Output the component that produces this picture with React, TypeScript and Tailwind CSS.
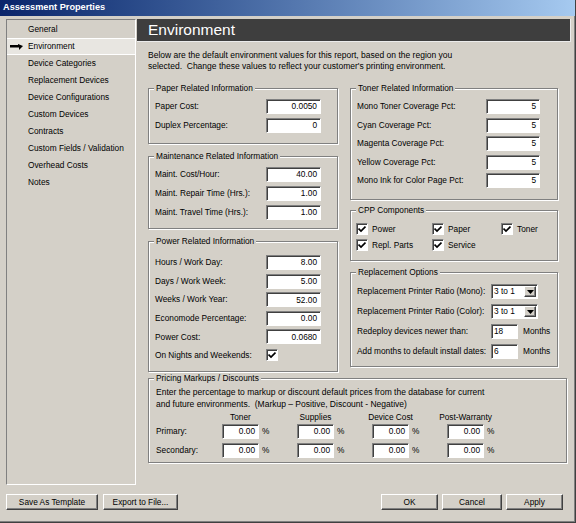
import React from "react"

const sunken =
  "bg-white border border-t-[#808080] border-l-[#808080] border-b-white border-r-white shadow-[inset_1px_1px_0_#404040]"
const raised =
  "bg-[#d4d0c8] border border-t-white border-l-white border-b-[#404040] border-r-[#404040] shadow-[inset_-1px_-1px_0_#808080]"

const navItems = [
  "General",
  "Environment",
  "Device Categories",
  "Replacement Devices",
  "Device Configurations",
  "Custom Devices",
  "Contracts",
  "Custom Fields / Validation",
  "Overhead Costs",
  "Notes",
]

function GroupBox({ title, className, children }: { title: string; className: string; children: React.ReactNode }) {
  return (
    <div className={`relative border border-[#808080] shadow-[inset_1px_1px_0_#fff,1px_1px_0_#fff] ${className}`}>
      <span className="absolute -top-[6px] left-[5px] bg-[#d4d0c8] px-[2px] leading-[11px]">{title}</span>
      {children}
    </div>
  )
}

function NumField({ value, w = "w-[55px]" }: { value: string; w?: string }) {
  return <div className={`${sunken} ${w} h-[15px] flex items-center justify-end pr-[3px] leading-none`}>{value}</div>
}

function Check() {
  return (
    <div className={`${sunken} w-[12px] h-[12px] flex items-center justify-center shrink-0`}>
      <svg width="8" height="8" viewBox="0 0 8 8">
        <path d="M0.5 3.5 L3 6 L7.5 1.5" stroke="#000" strokeWidth="1.7" fill="none" />
      </svg>
    </div>
  )
}

function Row({ label, children }: { label: string; children: React.ReactNode }) {
  return (
    <div className="flex items-center justify-between h-[15px]">
      <span className="whitespace-nowrap">{label}</span>
      {children}
    </div>
  )
}

function Select({ value }: { value: string }) {
  return (
    <div className={`${sunken} w-[47px] h-[15px] flex items-center justify-between pl-[2px] pr-[1px]`}>
      <span className="leading-none">{value}</span>
      <div className={`${raised} w-[12px] h-[11px] flex items-center justify-center`}>
        <svg width="7" height="4" viewBox="0 0 7 4">
          <path d="M0 0 H7 L3.5 4 Z" fill="#000" />
        </svg>
      </div>
    </div>
  )
}

function Btn({ label, w }: { label: string; w: string }) {
  return <button className={`${raised} ${w} h-[16px] flex items-center justify-center leading-none`}>{label}</button>
}

function PctCell({ value }: { value: string }) {
  return (
    <div className="w-[75px] flex items-center">
      <NumField value={value} w="w-[37px]" />
      <span className="ml-[3px]">%</span>
    </div>
  )
}

export default function App() {
  return (
    <div className="w-[576px] h-[523px] bg-[#d4d0c8] text-black text-[8.3px] font-['Liberation_Sans',Arial,sans-serif] border-r border-b border-[#404040] shadow-[inset_-1px_-1px_0_#808080] flex flex-col overflow-hidden">
      {/* Title bar */}
      <div className="h-[16px] bg-gradient-to-r from-[#0a246a] to-[#a6caf0] flex items-center pl-[3px]">
        <span className="text-white font-bold text-[9.2px]">Assessment Properties</span>
      </div>

      <div className="flex pt-[3px] pl-[6px]">
        {/* Sidebar */}
        <div className="w-[130px] h-[466px] border border-t-[#808080] border-l-[#808080] border-b-white border-r-white pt-[1px]">
          {navItems.map((item) => (
            <div
              key={item}
              className={`h-[17px] flex items-center relative pl-[21px] text-[8.3px] ${
                item === "Environment" ? "bg-[#e8e6e1] border-t border-b border-white" : ""
              }`}
            >
              {item === "Environment" && (
                <svg className="absolute left-[3px] top-[5px]" width="13" height="7" viewBox="0 0 13 7">
                  <path d="M0 1 H8 V0 L13 2 L9 6 L9 3.5 H0 Z" fill="#000" />
                </svg>
              )}
              {item}
            </div>
          ))}
        </div>

        {/* Content */}
        <div className="w-[434px] ml-[1px]">
          <div className="h-[23px] bg-[#3e3e3e] border-r border-b border-[#ececec] flex items-center pl-[11px]">
            <span className="text-white text-[15.5px] leading-none">Environment</span>
          </div>

          <div className="pl-[11px] mt-[8px] text-[8.5px] leading-[11px]">
            <p>Below are the default environment values for this report, based on the region you</p>
            <p>selected.&nbsp; Change these values to reflect your customer's printing environment.</p>
          </div>

          <div className="pl-[11px] mt-[16px] flex gap-[12px]">
            {/* Left column */}
            <div className="w-[190px] flex flex-col gap-[12px]">
              <GroupBox title="Paper Related Information" className="h-[56px] pt-[10px] pl-[6px] pr-[16px]">
                <div className="flex flex-col gap-[4px]">
                  <Row label="Paper Cost:"><NumField value="0.0050" /></Row>
                  <Row label="Duplex Percentage:"><NumField value="0" /></Row>
                </div>
              </GroupBox>
              <GroupBox title="Maintenance Related Information" className="h-[73px] pt-[10px] pl-[6px] pr-[16px]">
                <div className="flex flex-col gap-[4px]">
                  <Row label="Maint. Cost/Hour:"><NumField value="40.00" /></Row>
                  <Row label="Maint. Repair Time (Hrs.):"><NumField value="1.00" /></Row>
                  <Row label="Maint. Travel Time (Hrs.):"><NumField value="1.00" /></Row>
                </div>
              </GroupBox>
              <GroupBox title="Power Related Information" className="h-[131px] pt-[13px] pl-[6px] pr-[16px]">
                <div className="flex flex-col gap-[3.6px]">
                  <Row label="Hours / Work Day:"><NumField value="8.00" /></Row>
                  <Row label="Days / Work Week:"><NumField value="5.00" /></Row>
                  <Row label="Weeks / Work Year:"><NumField value="52.00" /></Row>
                  <Row label="Economode Percentage:"><NumField value="0.00" /></Row>
                  <Row label="Power Cost:"><NumField value="0.0680" /></Row>
                  <Row label="On Nights and Weekends:">
                    <div className="w-[55px] flex"><Check /></div>
                  </Row>
                </div>
              </GroupBox>
            </div>

            {/* Right column */}
            <div className="w-[208px] flex flex-col">
              <GroupBox title="Toner Related Information" className="h-[112px] pt-[10px] pl-[6px] pr-[17px]">
                <div className="flex flex-col gap-[3.5px]">
                  <Row label="Mono Toner Coverage Pct:"><NumField value="5" w="w-[54px]" /></Row>
                  <Row label="Cyan Coverage Pct:"><NumField value="5" w="w-[54px]" /></Row>
                  <Row label="Magenta Coverage Pct:"><NumField value="5" w="w-[54px]" /></Row>
                  <Row label="Yellow Coverage Pct:"><NumField value="5" w="w-[54px]" /></Row>
                  <Row label="Mono Ink for Color Page Pct:"><NumField value="5" w="w-[54px]" /></Row>
                </div>
              </GroupBox>
              <GroupBox title="CPP Components" className="mt-[10px] h-[51px] pt-[12px] pl-[5px]">
                <div className="grid grid-cols-[76px_69px_1fr] gap-y-[4px]">
                  {["Power", "Paper", "Toner", "Repl. Parts", "Service"].map((c) => (
                    <div key={c} className="flex items-center gap-[4px] h-[12px]">
                      <Check />
                      <span>{c}</span>
                    </div>
                  ))}
                </div>
              </GroupBox>
              <GroupBox title="Replacement Options" className="mt-[11px] h-[95px] pt-[11px] pl-[6px] pr-[2px]">
                <div className="flex flex-col gap-[5px]">
                  <Row label="Replacement Printer Ratio (Mono):">
                    <div className="w-[64px] flex"><Select value="3 to 1" /></div>
                  </Row>
                  <Row label="Replacement Printer Ratio (Color):">
                    <div className="w-[64px] flex"><Select value="3 to 1" /></div>
                  </Row>
                  <Row label="Redeploy devices newer than:">
                    <div className="w-[64px] flex items-center">
                      <div className={`${sunken} w-[27px] h-[15px] flex items-center pl-[2px]`}>18</div>
                      <span className="ml-[5px]">Months</span>
                    </div>
                  </Row>
                  <Row label="Add months to default install dates:">
                    <div className="w-[64px] flex items-center">
                      <div className={`${sunken} w-[27px] h-[15px] flex items-center pl-[2px]`}>6</div>
                      <span className="ml-[5px]">Months</span>
                    </div>
                  </Row>
                </div>
              </GroupBox>
            </div>
          </div>

          <div className="pl-[11px] mt-[6px]">
            <GroupBox title="Pricing Markups / Discounts" className="w-[419px] h-[85px] pt-[7px] pl-[7px]">
              <div className="text-[8.5px] leading-[12px]">
                <p>Enter the percentage to markup or discount default prices from the database for current</p>
                <p>and future environments.&nbsp; (Markup &ndash; Positive, Discount - Negative)</p>
              </div>
              <div className="flex mt-[2px] h-[11px] leading-[11px]">
                <div className="w-[66px]" />
                {["Toner", "Supplies", "Device Cost", "Post-Warranty"].map((h) => (
                  <div key={h} className="w-[75px]">
                    <div className="w-[37px] flex justify-center whitespace-nowrap">{h}</div>
                  </div>
                ))}
              </div>
              <div className="flex items-center mt-[1px]">
                <span className="w-[66px]">Primary:</span>
                <PctCell value="0.00" />
                <PctCell value="0.00" />
                <PctCell value="0.00" />
                <PctCell value="0.00" />
              </div>
              <div className="flex items-center mt-[4px]">
                <span className="w-[66px]">Secondary:</span>
                <PctCell value="0.00" />
                <PctCell value="0.00" />
                <PctCell value="0.00" />
                <PctCell value="0.00" />
              </div>
            </GroupBox>
          </div>
        </div>
      </div>

      {/* Footer buttons */}
      <div className="flex items-center mt-[9px] pl-[6px] pr-[12px]">
        <Btn label="Save As Template" w="w-[92px]" />
        <div className="w-[5px]" />
        <Btn label="Export to File..." w="w-[75px]" />
        <div className="flex-1" />
        <Btn label="OK" w="w-[57px]" />
        <div className="w-[4px]" />
        <Btn label="Cancel" w="w-[60px]" />
        <div className="w-[4px]" />
        <Btn label="Apply" w="w-[57px]" />
      </div>
    </div>
  )
}
